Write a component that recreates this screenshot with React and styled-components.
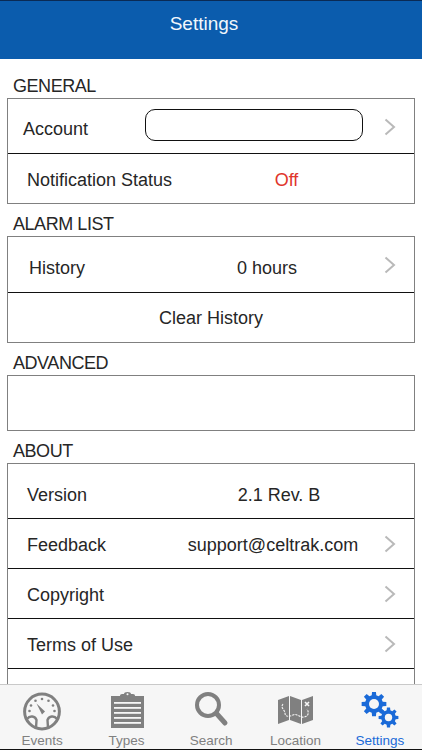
import React from 'react';
import styled, { createGlobalStyle } from 'styled-components';

const GRAY = '#808080';
const BLUE = '#1a6ad8';
const BAR = '#f6f6f6';

const GlobalStyle = createGlobalStyle`
  html, body {
    margin: 0;
    padding: 0;
    background: #ffffff;
    overflow: hidden;
  }
  body {
    font-family: "Liberation Sans", Arial, sans-serif;
  }
`;

const Screen = styled.div`
  width: 422px;
  height: 750px;
  display: flex;
  flex-direction: column;
  overflow: hidden;
  background: #ffffff;
`;

const Header = styled.header`
  height: 59px;
  flex: none;
  box-sizing: border-box;
  padding: 12px 14px 0 0;
  background: #0b5cad;
  border-top: 1px solid #0a2a55;
  color: #f2f7fc;
  font-size: 19px;
  line-height: 22px;
  text-align: center;
`;

const Content = styled.main`
  flex: 1;
  min-height: 0;
  overflow: hidden;
  padding: 16px 7px 0;
`;

const SectionLabel = styled.div`
  height: 23px;
  padding-left: 6px;
  font-size: 18px;
  line-height: 23px;
  color: #262626;
  letter-spacing: -0.45px;
`;

const Group = styled.section`
  border: 1px solid ${GRAY};
  margin-bottom: ${(p) => p.$gap}px;
  background: #ffffff;
`;

const Row = styled.div`
  height: ${(p) => p.$height}px;
  box-sizing: border-box;
  padding-top: ${(p) => p.$drop || 0}px;
  display: flex;
  align-items: center;
  position: relative;
  color: #262626;
  font-size: 18px;
  border-top: ${(p) => (p.$first ? 'none' : '1px solid #111111')};
`;

const Name = styled.div`
  width: ${(p) => p.$width}px;
  flex: none;
  padding-left: ${(p) => p.$left}px;
  box-sizing: border-box;
  white-space: nowrap;
`;

const Value = styled.div`
  flex: none;
  width: ${(p) => p.$width}px;
  text-align: center;
  white-space: nowrap;
  color: ${(p) => p.$color || '#262626'};
`;

const Centered = styled.div`
  width: 100%;
  text-align: center;
`;

const AccountField = styled.div`
  width: 218px;
  height: 32px;
  flex: none;
  margin: 0 0 9px -1px;
  box-sizing: border-box;
  border: 1.5px solid #111111;
  border-radius: 10px;
`;

const Chevron = styled.svg`
  position: absolute;
  right: 18px;
  top: 50%;
  margin-top: -8.5px;
  width: 12px;
  height: 18px;
`;

const TabBar = styled.nav`
  height: 66px;
  flex: none;
  box-sizing: border-box;
  display: flex;
  background: ${BAR};
  border-top: 1px solid #c9c9c9;
  border-bottom: 1px solid #111111;
`;

const Tab = styled.div`
  flex: 1;
  display: flex;
  flex-direction: column;
  align-items: center;
  color: ${(p) => (p.$active ? BLUE : GRAY)};
  font-size: 13.5px;
  line-height: 15px;
`;

const TabIcon = styled.svg`
  width: 40px;
  height: 40px;
  margin-top: 7px;
  margin-bottom: 1px;
`;

const ChevronIcon = () => (
  <Chevron viewBox="0 0 12 18">
    <path d="M1.5 1.5 L10 9 L1.5 16.5" fill="none" stroke="#b9b9b9" strokeWidth="2" />
  </Chevron>
);

const gearPath = (cx, cy, outer, inner, teeth) => {
  const step = (Math.PI * 2) / teeth;
  let d = '';
  for (let i = 0; i < teeth; i += 1) {
    const a = i * step;
    const pts = [
      [inner, a - step * 0.32],
      [outer, a - step * 0.2],
      [outer, a + step * 0.2],
      [inner, a + step * 0.32],
    ];
    pts.forEach(([r, t], j) => {
      const x = (cx + r * Math.cos(t)).toFixed(2);
      const y = (cy + r * Math.sin(t)).toFixed(2);
      d += `${i === 0 && j === 0 ? 'M' : 'L'}${x} ${y} `;
    });
  }
  return `${d}Z`;
};

const GaugeIcon = () => (
  <TabIcon viewBox="0 0 40 40">
    <circle cx="20" cy="19.5" r="17.4" fill="none" stroke={GRAY} strokeWidth="3" />
    <path d="M5 27 C8 23 13 24 14.5 28 L14 36 M35 27 C32 23 27 24 25.5 28 L26 36" fill="none" stroke={GRAY} strokeWidth="2.4" />
    <g fill={GRAY}>
      <circle cx="7.5" cy="19" r="1.3" />
      <circle cx="9" cy="13.5" r="1.3" />
      <circle cx="13.5" cy="8.8" r="1.3" />
      <circle cx="20" cy="7" r="1.3" />
      <circle cx="26.5" cy="8.8" r="1.3" />
      <circle cx="31" cy="13.5" r="1.3" />
      <circle cx="32.5" cy="19" r="1.3" />
    </g>
    <path d="M14.5 11.5 L23 19.5 L20 22.5 Z" fill={GRAY} />
  </TabIcon>
);

const ClipboardIcon = () => (
  <TabIcon viewBox="0 0 40 40">
    <path d="M4 4 H13 V3.5 Q13 2 15 2 H17 A3.5 2 0 0 1 24 2 H26 Q28 2 28 3.5 V4 H37 V36 H4 Z" fill={GRAY} />
    <circle cx="20.5" cy="2.2" r="1" fill={BAR} />
    <g fill={BAR}>
      <rect x="7" y="10" width="27" height="1.8" />
      <rect x="7" y="15" width="27" height="1.8" />
      <rect x="7" y="20" width="27" height="1.8" />
      <rect x="7" y="25" width="27" height="1.8" />
      <rect x="7" y="30" width="27" height="1.8" />
    </g>
  </TabIcon>
);

const SearchIcon = () => (
  <TabIcon viewBox="0 0 40 40">
    <circle cx="17" cy="13" r="11" fill="none" stroke={GRAY} strokeWidth="4" />
    <path d="M25.5 21.5 L34 31" stroke={GRAY} strokeWidth="5" strokeLinecap="round" />
  </TabIcon>
);

const MapIcon = () => (
  <TabIcon viewBox="0 0 40 40">
    <path d="M3 8 L14 4 V28 L3 32 Z M15 4 L26 8 V32 L15 28 Z M27 8 L38 4 V28 L27 32 Z" fill={GRAY} />
    <path d="M8 12 C5 16 10 18 10 21 C10 25 14 25 18 23 C22 21 25 26 29 25 C34 24 34 20 32 17" fill="none" stroke={BAR} strokeWidth="1.1" strokeDasharray="2.2 1" />
    <path d="M30 10 L34 14 M34 10 L30 14" stroke={BAR} strokeWidth="1.6" />
  </TabIcon>
);

const GearsIcon = () => (
  <TabIcon viewBox="0 0 40 40">
    <path d={gearPath(14, 12, 12.5, 9, 8)} fill={BLUE} />
    <circle cx="14" cy="12" r="5" fill={BAR} />
    <path d={gearPath(28.5, 25.5, 10, 7.4, 8)} fill={BLUE} />
    <circle cx="28.5" cy="25.5" r="3.7" fill={BAR} />
  </TabIcon>
);

const tabs = [
  { label: 'Events', Icon: GaugeIcon },
  { label: 'Types', Icon: ClipboardIcon },
  { label: 'Search', Icon: SearchIcon },
  { label: 'Location', Icon: MapIcon },
  { label: 'Settings', Icon: GearsIcon, active: true },
];

const App = () => (
  <Screen>
    <GlobalStyle />
    <Header>Settings</Header>
    <Content>
      <SectionLabel>GENERAL</SectionLabel>
      <Group $gap={9}>
        <Row $first $height={54} $drop={6}>
          <Name $width={138} $left={15}>Account</Name>
          <AccountField />
          <ChevronIcon />
        </Row>
        <Row $height={50} $drop={4}>
          <Name $width={200} $left={19}>Notification Status</Name>
          <Value $width={157} $color="#e0352b">Off</Value>
        </Row>
      </Group>

      <SectionLabel>ALARM LIST</SectionLabel>
      <Group $gap={9}>
        <Row $first $height={55} $drop={7}>
          <Name $width={160} $left={21}>History</Name>
          <Value $width={198}>0 hours</Value>
          <ChevronIcon />
        </Row>
        <Row $height={50} $drop={2}>
          <Centered>Clear History</Centered>
        </Row>
      </Group>

      <SectionLabel>ADVANCED</SectionLabel>
      <Group $gap={9}>
        <Row $first $height={54} />
      </Group>

      <SectionLabel>ABOUT</SectionLabel>
      <Group $gap={0}>
        <Row $first $height={54} $drop={8}>
          <Name $width={200} $left={19}>Version</Name>
          <Value $width={142}>2.1 Rev. B</Value>
        </Row>
        <Row $height={50} $drop={3}>
          <Name $width={160} $left={19}>Feedback</Name>
          <Value $width={210}>support@celtrak.com</Value>
          <ChevronIcon />
        </Row>
        <Row $height={50} $drop={3}>
          <Name $width={200} $left={19}>Copyright</Name>
          <ChevronIcon />
        </Row>
        <Row $height={50} $drop={3}>
          <Name $width={200} $left={19}>Terms of Use</Name>
          <ChevronIcon />
        </Row>
        <Row $height={50} />
      </Group>
    </Content>
    <TabBar>
      {tabs.map(({ label, Icon, active }) => (
        <Tab key={label} $active={active}>
          <Icon />
          {label}
        </Tab>
      ))}
    </TabBar>
  </Screen>
);

export default App;
